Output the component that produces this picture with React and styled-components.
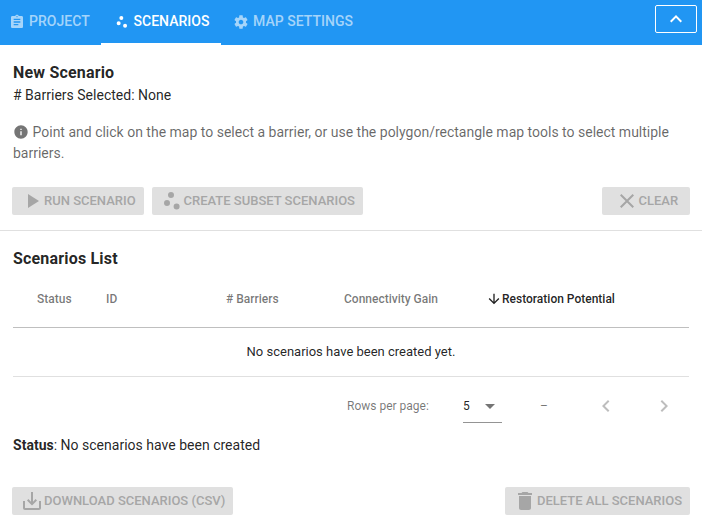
import React from 'react';
import styled, { createGlobalStyle } from 'styled-components';

const GlobalStyle = createGlobalStyle`
  *, *::before, *::after { box-sizing: border-box; }
  body {
    margin: 0;
    background: #fff;
    color: rgba(0, 0, 0, 0.87);
    font-family: Roboto, sans-serif;
    overflow: hidden;
  }
`;

const paths = {
  clipboard:
    'M19 3h-4.18C14.4 1.84 13.3 1 12 1c-1.3 0-2.4.84-2.82 2H5c-1.1 0-2 .9-2 2v14c0 1.1.9 2 2 2h14c1.1 0 2-.9 2-2V5c0-1.1-.9-2-2-2zm-7 0c.55 0 1 .45 1 1s-.45 1-1 1-1-.45-1-1 .45-1 1-1zm2 14H7v-2h7v2zm3-4H7v-2h10v2zm0-4H7V7h10v2z',
  scatter:
    'M4 14a3 3 0 1 0 6 0a3 3 0 1 0-6 0M8 6a3 3 0 1 0 6 0a3 3 0 1 0-6 0M13.6 17.6a3 3 0 1 0 6 0a3 3 0 1 0-6 0',
  settings:
    'M19.43 12.98c.04-.32.07-.64.07-.98s-.03-.66-.07-.98l2.11-1.65c.19-.15.24-.42.12-.64l-2-3.46c-.12-.22-.39-.3-.61-.22l-2.49 1c-.52-.4-1.08-.73-1.69-.98l-.38-2.65C14.46 2.18 14.25 2 14 2h-4c-.25 0-.46.18-.49.42l-.38 2.65c-.61.25-1.17.59-1.69.98l-2.49-1c-.23-.09-.49 0-.61.22l-2 3.46c-.13.22-.07.49.12.64l2.11 1.65c-.04.32-.07.65-.07.98s.03.66.07.98l-2.11 1.65c-.19.15-.24.42-.12.64l2 3.46c.12.22.39.3.61.22l2.49-1c.52.4 1.08.73 1.69.98l.38 2.65c.03.24.24.42.49.42h4c.25 0 .46-.18.49-.42l.38-2.65c.61-.25 1.17-.59 1.69-.98l2.49 1c.23.09.49 0 .61-.22l2-3.46c.12-.22.07-.49-.12-.64l-2.11-1.65zM12 15.5c-1.93 0-3.5-1.57-3.5-3.5s1.57-3.5 3.5-3.5 3.5 1.57 3.5 3.5-1.57 3.5-3.5 3.5z',
  up: 'M12 8l-6 6 1.41 1.41L12 10.83l4.59 4.58L18 14z',
  info: 'M12 2C6.48 2 2 6.48 2 12s4.48 10 10 10 10-4.48 10-10S17.52 2 12 2zm1 15h-2v-6h2v6zm0-8h-2V7h2v2z',
  play: 'M8 5v14l11-7z',
  close:
    'M19 6.41L17.59 5 12 10.59 6.41 5 5 6.41 10.59 12 5 17.59 6.41 19 12 13.41 17.59 19 19 17.59 13.41 12z',
  arrowDown: 'M20 12l-1.41-1.41L13 16.17V4h-2v12.17l-5.58-5.59L4 12l8 8 8-8z',
  menuDown: 'M7 10l5 5 5-5z',
  left: 'M15.41 7.41L14 6l-6 6 6 6 1.41-1.41L10.83 12z',
  right: 'M10 6L8.59 7.41 13.17 12l-4.58 4.59L10 18l6-6z',
  save: 'M19 12v7H5v-7H3v7c0 1.1.9 2 2 2h14c1.1 0 2-.9 2-2v-7h-2zm-6 .67l2.59-2.58L17 11.5l-5 5-5-5 1.41-1.41L11 12.67V3h2z',
  trash: 'M6 19c0 1.1.9 2 2 2h8c1.1 0 2-.9 2-2V7H6v12zM19 4h-3.5l-1-1h-5l-1 1H5v2h14V4z',
};

const Svg = styled.svg`
  display: block;
  flex: none;
  fill: currentColor;
`;

const Icon = ({ name, size = 24, className }) => (
  <Svg className={className} width={size} height={size} viewBox="0 0 24 24" aria-hidden="true">
    <path d={paths[name]} />
  </Svg>
);

const Bar = styled.header`
  display: flex;
  height: 45px;
  background: #2196f3;
  padding-right: 5px;
`;

const Tab = styled.button`
  display: flex;
  align-items: center;
  gap: 4px;
  width: ${(p) => p.$width}px;
  padding: 0 0 0 ${(p) => p.$inset}px;
  border: 0;
  border-bottom: 2px solid ${(p) => (p.$active ? '#fff' : 'transparent')};
  background: none;
  color: ${(p) => (p.$active ? '#fff' : 'rgba(255, 255, 255, 0.6)')};
  font: 500 14px/41px Roboto, sans-serif;
  letter-spacing: 0.03px;
  white-space: nowrap;
`;

const CollapseButton = styled.button`
  display: flex;
  align-items: center;
  justify-content: center;
  width: 42px;
  height: 28px;
  margin: 5px 0 0 auto;
  padding: 0;
  border: 1px solid #fff;
  border-radius: 2px;
  background: none;
  color: #fff;
`;

const NewScenario = styled.section`
  height: 186px;
  padding: 17px 12px 0;
  border-bottom: 1px solid #e0e0e0;
`;

const ScenariosList = styled.section`
  padding: 17px 13px 0;
`;

const Heading = styled.h2`
  margin: 0 0 0 ${(p) => p.$indent || 0}px;
  font-size: 16px;
  font-weight: 700;
  line-height: 22px;
  letter-spacing: 0.18px;
`;

const Line = styled.div`
  padding-left: 1px;
  font-size: 14px;
  line-height: 22px;
  letter-spacing: 0.01px;
`;

const Hint = styled.p`
  height: 42px;
  margin: 16px 0 0 1px;
  color: rgba(0, 0, 0, 0.6);
  font-size: 14px;
  line-height: 21px;
`;

const HintIcon = styled(Icon)`
  display: inline-block;
  margin-right: 3.5px;
  color: rgba(0, 0, 0, 0.54);
  vertical-align: -3px;
`;

const Actions = styled.div`
  display: flex;
  gap: 8px;
  margin: ${(p) => p.$top}px ${(p) => p.$bleed || 0}px 0;
`;

const ActionButton = styled.button`
  display: flex;
  align-items: center;
  width: ${(p) => p.$width}px;
  height: 28px;
  padding: 0 0 0 ${(p) => p.$inset}px;
  margin-left: ${(p) => (p.$end ? 'auto' : 0)};
  border: 0;
  border-radius: 2px;
  background: #e0e0e0;
  color: #a6a6a6;
  font: 500 13px/28px Roboto, sans-serif;
  letter-spacing: 0;
  white-space: nowrap;
`;

const Table = styled.div`
  margin-top: 0;
`;

const HeadRow = styled.div`
  display: grid;
  grid-template-columns: 69px 120px 118px 132px 1fr;
  align-items: center;
  height: 58px;
  padding-left: 24px;
  border-bottom: 1px solid #bfbfbf;
`;

const HeadCell = styled.div`
  display: flex;
  align-items: center;
  margin-left: ${(p) => (p.$sorted ? 10 : 0)}px;
  color: ${(p) => (p.$sorted ? 'rgba(0, 0, 0, 0.87)' : 'rgba(0, 0, 0, 0.54)')};
  font-size: 12px;
  font-weight: 500;
  white-space: nowrap;
`;

const EmptyRow = styled.div`
  height: 49px;
  border-bottom: 1px solid #e0e0e0;
  font-size: 13px;
  line-height: 48px;
  text-align: center;
`;

const Pager = styled.div`
  display: flex;
  align-items: center;
  height: 57px;
  padding: 1px 13px 0 0;
  color: rgba(0, 0, 0, 0.54);
  font-size: 12px;
`;

const PagerLabel = styled.span`
  width: 116px;
  margin-left: auto;
`;

const PageSize = styled.div`
  display: flex;
  align-items: center;
  justify-content: space-between;
  width: 39px;
  height: 34px;
  border-bottom: 1px solid #949494;
`;

const PageSizeValue = styled.span`
  color: rgba(0, 0, 0, 0.87);
`;

const Range = styled.span`
  width: 92px;
  padding-left: 38px;
`;

const PageArrow = styled(Icon)`
  margin-left: ${(p) => (p.name === 'right' ? 34 : 0)}px;
  color: rgba(0, 0, 0, 0.26);
`;

const StatusLine = styled(Line)`
  padding: 0;
`;

export default function App() {
  return (
    <>
      <GlobalStyle />
      <Bar>
        <Tab $width={101} $inset={9}>
          <Icon name="clipboard" size={16} />
          PROJECT
        </Tab>
        <Tab $width={120} $inset={12.5} $active>
          <Icon name="scatter" size={16} />
          SCENARIOS
        </Tab>
        <Tab $width={150} $inset={12}>
          <Icon name="settings" size={16} />
          MAP SETTINGS
        </Tab>
        <CollapseButton aria-label="Collapse">
          <Icon name="up" />
        </CollapseButton>
      </Bar>

      <NewScenario>
        <Heading $indent={1}>New Scenario</Heading>
        <Line># Barriers Selected: None</Line>
        <Hint>
          <HintIcon name="info" size={16} />
          Point and click on the map to select a barrier, or use the polygon/rectangle map tools to
          select multiple barriers.
        </Hint>
        <Actions $top={23}>
          <ActionButton $width={132} $inset={8}>
            <Icon name="play" />
            RUN SCENARIO
          </ActionButton>
          <ActionButton $width={211} $inset={7.5}>
            <Icon name="scatter" />
            CREATE SUBSET SCENARIOS
          </ActionButton>
          <ActionButton $width={88} $inset={12.5} $end>
            <Icon name="close" />
            CLEAR
          </ActionButton>
        </Actions>
      </NewScenario>

      <ScenariosList>
        <Heading>Scenarios List</Heading>
        <Table>
          <HeadRow>
            <HeadCell>Status</HeadCell>
            <HeadCell>ID</HeadCell>
            <HeadCell># Barriers</HeadCell>
            <HeadCell>Connectivity Gain</HeadCell>
            <HeadCell $sorted>
              <Icon name="arrowDown" size={16} />
              Restoration Potential
            </HeadCell>
          </HeadRow>
          <EmptyRow>No scenarios have been created yet.</EmptyRow>
          <Pager>
            <PagerLabel>Rows per page:</PagerLabel>
            <PageSize>
              <PageSizeValue>5</PageSizeValue>
              <Icon name="menuDown" />
            </PageSize>
            <Range>–</Range>
            <PageArrow name="left" />
            <PageArrow name="right" />
          </Pager>
        </Table>
        <StatusLine>
          <b>Status</b>: No scenarios have been created
        </StatusLine>
        <Actions $top={31} $bleed={-1}>
          <ActionButton $width={221} $inset={8}>
            <Icon name="save" />
            DOWNLOAD SCENARIOS (CSV)
          </ActionButton>
          <ActionButton $width={185} $inset={8} $end>
            <Icon name="trash" />
            DELETE ALL SCENARIOS
          </ActionButton>
        </Actions>
      </ScenariosList>
    </>
  );
}
